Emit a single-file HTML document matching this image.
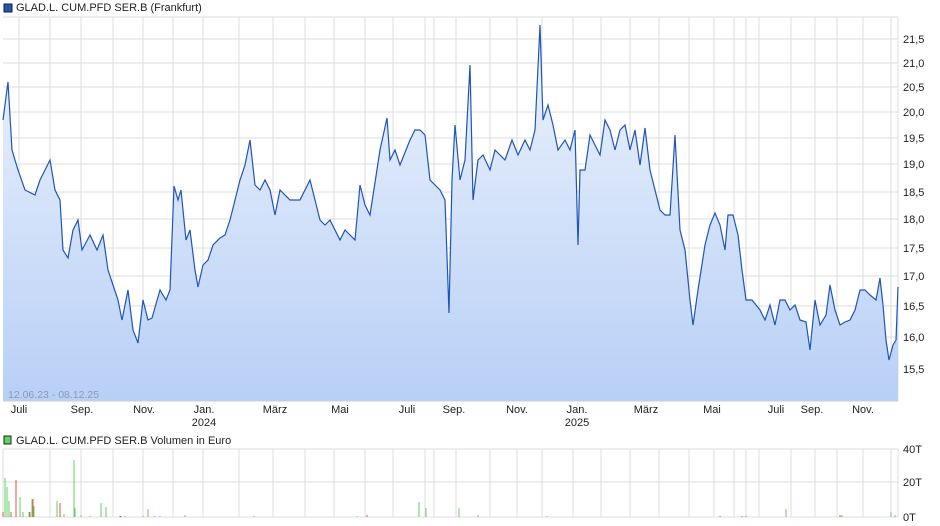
<!DOCTYPE html>
<html><head><meta charset="utf-8"><style>
body{margin:0;background:#fff;width:940px;height:526px;overflow:hidden;font-family:"Liberation Sans",sans-serif;}
svg{position:absolute;left:0;top:0}
text{font-family:"Liberation Sans",sans-serif;font-size:11px;fill:#222}
</style></head><body>
<svg width="940" height="526" viewBox="0 0 940 526">
<defs><linearGradient id="g" x1="0" y1="0" x2="0" y2="1">
<stop offset="0" stop-color="#eef3fd"/><stop offset="1" stop-color="#b8d0f6"/></linearGradient></defs>
<rect x="4" y="4" width="8" height="8" fill="#1f55b8" stroke="#222" stroke-width="1"/>
<text x="16" y="11">GLAD.L. CUM.PFD SER.B (Frankfurt)</text>
<g stroke="#dcdcdc" stroke-width="1" fill="none">
<path d="M3 17H898M3 39H898M3 63H898M3 87H898M3 112H898M3 138H898M3 164H898M3 192H898M3 219H898M3 248H898M3 276H898M3 306H898M3 337H898M3 369H898"/>
<path d="M19 17V401M50 17V401M81 17V401M113 17V401M143 17V401M173 17V401M203 17V401M239 17V401M273 17V401M305 17V401M334 17V401M365 17V401M393 17V401M425 17V401M434 17V401M456 17V401M490 17V401M517 17V401M542 17V401M573 17V401M601 17V401M630 17V401M659 17V401M689 17V401M714 17V401M734 17V401M746 17V401M759 17V401M791 17V401M815 17V401M837 17V401M863 17V401M891 17V401M898 17V401"/>
</g>
<path fill="url(#g)" d="M3 401 L3 120 L8 82 L12 150 L18 170 L25 190 L35 195 L40 180 L50 160 L55 190 L60 200 L63 250 L68 258 L73 230 L78 220 L82 250 L90 235 L97 250 L103 235 L108 270 L113 285 L118 300 L122 320 L128 290 L133 330 L138 343 L143 300 L148 320 L152 318 L160 290 L166 300 L170 290 L174 186 L178 200 L181 190 L186 240 L190 230 L195 270 L198 287 L203 265 L208 260 L213 245 L220 238 L225 235 L230 220 L235 200 L240 180 L245 165 L250 140 L255 185 L260 190 L265 180 L270 190 L275 215 L280 190 L290 200 L300 200 L310 180 L320 220 L325 225 L330 220 L340 240 L345 230 L355 240 L360 185 L365 205 L370 215 L380 150 L387 118 L390 160 L395 150 L400 165 L410 140 L415 130 L420 130 L425 135 L430 180 L440 190 L445 200 L449 313 L452 180 L455 125 L460 180 L465 160 L470 65 L473 200 L478 160 L483 155 L490 170 L495 150 L500 155 L505 160 L512 140 L518 155 L525 140 L530 150 L535 130 L540 25 L543 120 L548 105 L553 125 L558 150 L565 140 L570 150 L575 130 L578 245 L580 170 L585 170 L590 135 L595 145 L600 155 L605 120 L610 130 L615 150 L620 130 L625 125 L630 150 L635 130 L640 165 L645 128 L650 170 L655 190 L660 210 L665 215 L670 215 L675 135 L680 230 L685 250 L690 300 L693 325 L698 290 L705 245 L710 225 L715 213 L720 225 L725 250 L728 215 L733 215 L738 235 L742 270 L746 300 L752 300 L756 305 L760 310 L765 320 L770 305 L775 325 L780 300 L785 300 L790 310 L795 305 L800 320 L806 322 L810 350 L815 300 L820 325 L826 315 L830 285 L835 310 L840 325 L845 322 L850 320 L855 310 L860 290 L865 290 L870 295 L876 300 L880 278 L883 305 L886 340 L889 360 L893 345 L896 340 L898 287 L898 401 Z"/>
<path fill="none" stroke="#1f55b8" stroke-width="1.2" d="M3 120 L8 82 L12 150 L18 170 L25 190 L35 195 L40 180 L50 160 L55 190 L60 200 L63 250 L68 258 L73 230 L78 220 L82 250 L90 235 L97 250 L103 235 L108 270 L113 285 L118 300 L122 320 L128 290 L133 330 L138 343 L143 300 L148 320 L152 318 L160 290 L166 300 L170 290 L174 186 L178 200 L181 190 L186 240 L190 230 L195 270 L198 287 L203 265 L208 260 L213 245 L220 238 L225 235 L230 220 L235 200 L240 180 L245 165 L250 140 L255 185 L260 190 L265 180 L270 190 L275 215 L280 190 L290 200 L300 200 L310 180 L320 220 L325 225 L330 220 L340 240 L345 230 L355 240 L360 185 L365 205 L370 215 L380 150 L387 118 L390 160 L395 150 L400 165 L410 140 L415 130 L420 130 L425 135 L430 180 L440 190 L445 200 L449 313 L452 180 L455 125 L460 180 L465 160 L470 65 L473 200 L478 160 L483 155 L490 170 L495 150 L500 155 L505 160 L512 140 L518 155 L525 140 L530 150 L535 130 L540 25 L543 120 L548 105 L553 125 L558 150 L565 140 L570 150 L575 130 L578 245 L580 170 L585 170 L590 135 L595 145 L600 155 L605 120 L610 130 L615 150 L620 130 L625 125 L630 150 L635 130 L640 165 L645 128 L650 170 L655 190 L660 210 L665 215 L670 215 L675 135 L680 230 L685 250 L690 300 L693 325 L698 290 L705 245 L710 225 L715 213 L720 225 L725 250 L728 215 L733 215 L738 235 L742 270 L746 300 L752 300 L756 305 L760 310 L765 320 L770 305 L775 325 L780 300 L785 300 L790 310 L795 305 L800 320 L806 322 L810 350 L815 300 L820 325 L826 315 L830 285 L835 310 L840 325 L845 322 L850 320 L855 310 L860 290 L865 290 L870 295 L876 300 L880 278 L883 305 L886 340 L889 360 L893 345 L896 340 L898 287"/>
<line x1="3" y1="401" x2="898" y2="401" stroke="#ccc"/>
<text x="8" y="398" style="fill:#8a9ab5;font-size:10.5px">12.06.23 - 08.12.25</text>
<g>
<text x="903" y="43">21,5</text><text x="903" y="67">21,0</text><text x="903" y="91">20,5</text><text x="903" y="116">20,0</text><text x="903" y="142">19,5</text><text x="903" y="168">19,0</text><text x="903" y="196">18,5</text><text x="903" y="223">18,0</text><text x="903" y="252">17,5</text><text x="903" y="280">17,0</text><text x="903" y="310">16,5</text><text x="903" y="341">16,0</text><text x="903" y="373">15,5</text>
</g>
<g text-anchor="middle">
<text x="19" y="413">Juli</text><text x="82" y="413">Sep.</text><text x="144" y="413">Nov.</text><text x="204" y="413">Jan.</text><text x="204" y="426">2024</text><text x="275" y="413">März</text><text x="340" y="413">Mai</text><text x="407" y="413">Juli</text><text x="454" y="413">Sep.</text><text x="517" y="413">Nov.</text><text x="577" y="413">Jan.</text><text x="577" y="426">2025</text><text x="646" y="413">März</text><text x="712" y="413">Mai</text><text x="776" y="413">Juli</text><text x="812" y="413">Sep.</text><text x="863" y="413">Nov.</text>
</g>
<rect x="4" y="436" width="7" height="8" fill="#5fd35f" stroke="#222" stroke-width="1"/>
<text x="16" y="444">GLAD.L. CUM.PFD SER.B Volumen in Euro</text>
<g stroke="#dcdcdc" fill="none">
<path d="M3 449H898M3 482H898M3 517H898"/>
<path d="M3 449V517M50 449V517M81 449V517M113 449V517M143 449V517M173 449V517M203 449V517M239 449V517M273 449V517M305 449V517M334 449V517M365 449V517M393 449V517M425 449V517M434 449V517M456 449V517M490 449V517M517 449V517M542 449V517M573 449V517M601 449V517M630 449V517M659 449V517M689 449V517M714 449V517M734 449V517M746 449V517M759 449V517M791 449V517M815 449V517M837 449V517M863 449V517M891 449V517M898 449V517"/>
</g>
<g stroke="#5fd35f" stroke-width="1">
<path d="M5 517V478M7 517V487M9 517V501M20 517V497M23 517V512M29 517V512M32 517V499M34 517V506M57 517V501M64 517V514M74 517V460M75 517V508M81 517V515M90 517V516M101 517V503M106 517V507M125 517V516M143 517V516M148 517V509M154 517V516M160 517V516M185 517V515M254 517V516M357 517V516M419 517V502M426 517V508M459 517V508M478 517V515M547 517V516M786 517V509M842 517V515M891 517V512M895 517V515"/>
</g>
<g stroke="#e05050" stroke-width="1">
<path d="M3 517V512M11 517V512M16 517V480M30 517V512M33 517V499M60 517V503M120 517V516M121 517V516M367 517V515M720 517V516M742 517V516M746 517V516M840 517V515"/>
</g>
<text x="903" y="453">40T</text><text x="903" y="486">20T</text><text x="903" y="521">0T</text>
</svg>
</body></html>
